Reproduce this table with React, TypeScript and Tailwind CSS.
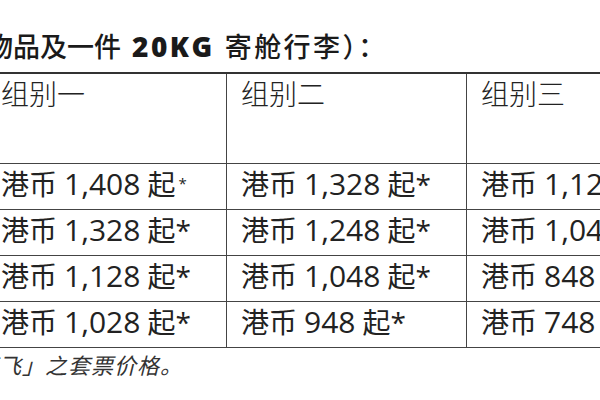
type Price = { num: string; sup?: boolean };

const rows: Price[][] = [
  [{ num: "1,408", sup: true }, { num: "1,328" }, { num: "1,128" }],
  [{ num: "1,328" }, { num: "1,248" }, { num: "1,048" }],
  [{ num: "1,128" }, { num: "1,048" }, { num: "848" }],
  [{ num: "1,028" }, { num: "948" }, { num: "748" }],
];

const font = { fontFamily: '"Open Sans", "Noto Sans CJK SC", sans-serif' };

export default function App() {
  return (
    <div className="w-[600px] h-[400px] overflow-hidden bg-white text-[#222]" style={font}>
      {/* heading, cut at the left edge like the source scan */}
      <div className="pt-[28px] h-[72px] whitespace-nowrap leading-[36px] ml-[-14px] text-[#1a1a1a] flex items-baseline">
        <span className="text-[27px] font-medium">物品及一件</span>
        <span className="text-[28px] font-extrabold ml-[11px] tracking-[2.5px]">20KG</span>
        <span className="text-[27px] font-medium ml-[10px] tracking-[2.4px]">寄舱行李）：</span>
      </div>

      <div className="ml-[-14px] w-[720px] border-t-2 border-[#333]">
        <div className="grid grid-cols-[240px_240px_240px] h-[90px] border-b-[1.5px] border-[#444]">
          {["组别一", "组别二", "组别三"].map((h) => (
            <div key={h} className="border-l-[1.5px] border-[#444] pl-[14px] pt-[1px] text-[28px] leading-[38px] font-light">
              {h}
            </div>
          ))}
        </div>
        {rows.map((row, i) => (
          <div key={i} className="grid grid-cols-[240px_240px_240px] h-[46px] border-b-[1.5px] border-[#444]">
            {row.map((p, j) => (
              <div
                key={j}
                className="border-l-[1.5px] border-[#444] pl-[14px] leading-[40px] whitespace-nowrap flex items-baseline"
              >
                <span className="text-[28px]">港币</span>
                <span className="text-[30px] ml-[7px]">{p.num}</span>
                <span className="text-[28px] ml-[7px]">起</span>
                {p.sup ? (
                  <span className="text-[15px] self-start mt-[-1px] ml-[3px]">*</span>
                ) : (
                  <span className="text-[28px]">*</span>
                )}
              </div>
            ))}
          </div>
        ))}
      </div>

      <div className="ml-[-24px] pt-[3px] whitespace-nowrap text-[22px] tracking-[1px] leading-[28px] italic text-[#333]">
        直飞」之套票价格。
      </div>
    </div>
  );
}
